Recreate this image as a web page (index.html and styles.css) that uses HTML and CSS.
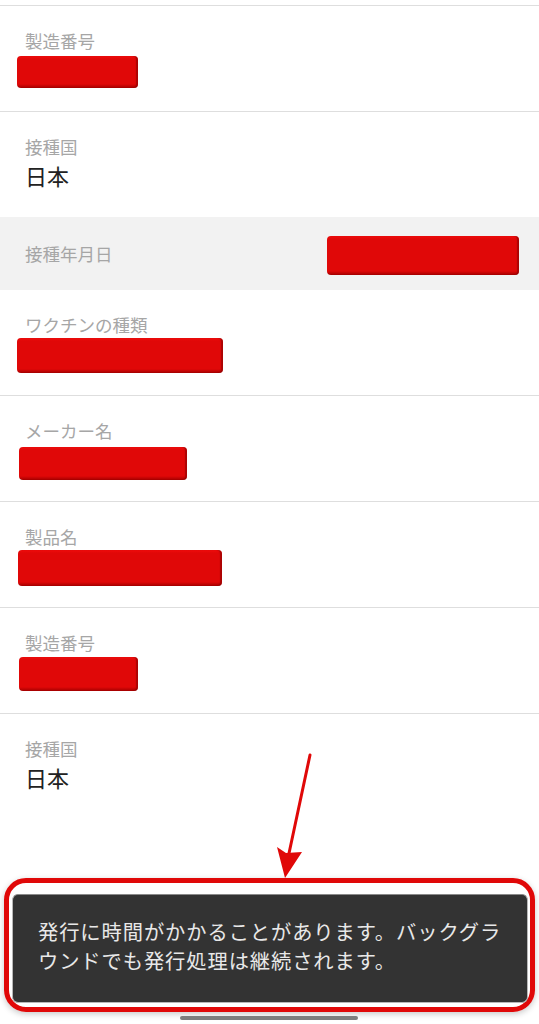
FILE: index.html
```html
<!DOCTYPE html>
<html lang="ja">
<head>
<meta charset="utf-8">
<title>接種記録</title>
<link rel="stylesheet" href="styles.css">
</head>
<body>
<div class="screen">
  <div class="top-edge"></div>
  <div class="row">
    <div class="label">製造番号</div>
    <div class="redact r-serial"></div>
  </div>
  <div class="row no-border">
    <div class="label">接種国</div>
    <div class="value">日本</div>
  </div>
  <div class="row-date">
    <div class="label">接種年月日</div>
    <div class="redact r-date"></div>
  </div>
  <div class="row">
    <div class="label">ワクチンの種類</div>
    <div class="redact r-vaccine"></div>
  </div>
  <div class="row">
    <div class="label">メーカー名</div>
    <div class="redact r-maker"></div>
  </div>
  <div class="row">
    <div class="label">製品名</div>
    <div class="redact r-product"></div>
  </div>
  <div class="row">
    <div class="label">製造番号</div>
    <div class="redact r-serial2"></div>
  </div>
  <div class="row no-border">
    <div class="label">接種国</div>
    <div class="value">日本</div>
  </div>

  <svg class="arrow" width="539" height="1024" viewBox="0 0 539 1024">
    <line x1="310" y1="755" x2="288" y2="858" stroke="#e00808" stroke-width="3" stroke-linecap="round"/>
    <polygon points="285,878 277,847 286,853 302,852" fill="#e00808"/>
  </svg>

  <div class="highlight"></div>
  <div class="toast">発行に時間がかかることがあります。バックグラウンドでも発行処理は継続されます。</div>
  <div class="home-bar"></div>
</div>
</body>
</html>
```
FILE: styles.css
```css
html, body {
  margin: 0;
  padding: 0;
  background: #ffffff;
}
body {
  font-family: "Noto Sans CJK JP", "Noto Sans", sans-serif;
  width: 539px;
  height: 1024px;
  overflow: hidden;
}
.screen {
  position: relative;
  width: 539px;
  height: 1024px;
}
.top-edge {
  height: 5px;
  border-bottom: 1px solid #dedede;
}
.row {
  height: 82px;
  padding: 23px 0 0 25px;
  border-bottom: 1px solid #dedede;
}
.row.no-border {
  border-bottom: none;
}
.label {
  font-size: 17.5px;
  line-height: 24px;
  color: #a6a6a6;
}
.value {
  font-size: 22px;
  line-height: 32px;
  color: #222222;
}
.row-date {
  height: 73px;
  background: #f2f2f2;
  display: flex;
  align-items: center;
  justify-content: space-between;
  padding: 0 20px 0 25px;
}
.redact {
  background: linear-gradient(#f20c0c 0, #e00808 3px, #e00808 calc(100% - 4px), #a50000 100%);
  border-radius: 4px;
  box-shadow: inset -2px 0 1px rgba(130, 0, 0, 0.55);
}
.row .redact {
  margin-left: -8px;
  margin-top: 3px;
}
.r-serial { width: 121px; height: 32px; }
.r-vaccine { width: 206px; height: 35px; margin-top: 1px !important; }
.r-maker { width: 168px; height: 33px; margin-left: -6px !important; margin-top: 4px !important; }
.r-product { width: 204px; height: 36px; margin-left: -7px !important; margin-top: 1px !important; }
.r-serial2 { width: 119px; height: 34px; margin-left: -6px !important; margin-top: 2px !important; }
.r-date { width: 192px; height: 39px; margin-top: 3px; }

.arrow {
  position: absolute;
  left: 0;
  top: 0;
  pointer-events: none;
}
.highlight {
  position: absolute;
  left: 4px;
  top: 878px;
  width: 521px;
  height: 124px;
  border: 5px solid #e00808;
  border-radius: 22px;
  box-shadow: 0 2px 6px rgba(0, 0, 0, 0.22);
}
.toast {
  position: absolute;
  left: 12px;
  top: 894px;
  width: 472px;
  height: 85px;
  padding: 22px 17px 0 25px;
  background: #333333;
  border: 1px solid #b8b8b8;
  border-top-color: #8a8a8a;
  border-radius: 6px;
  box-sizing: content-box;
  color: #e8e8e8;
  font-size: 20.3px;
  line-height: 29px;
  letter-spacing: 0.9px;
}
.home-bar {
  position: absolute;
  left: 180px;
  top: 1016px;
  width: 178px;
  height: 4px;
  border-radius: 2px;
  background: #7d7d7d;
}
```
